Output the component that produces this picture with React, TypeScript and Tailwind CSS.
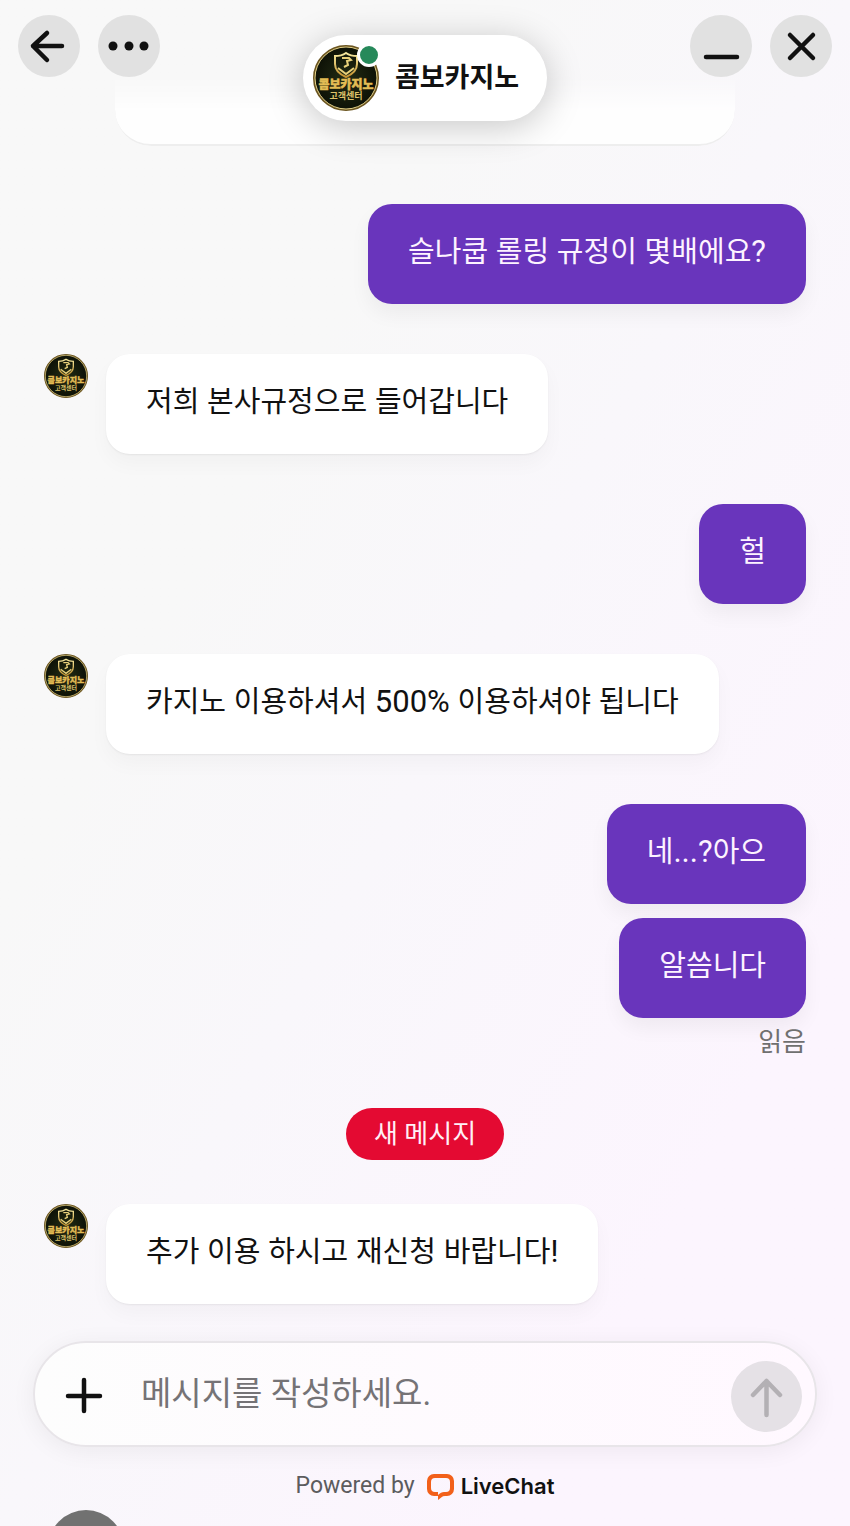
import React, { useId, useState } from 'react';

interface Message {
    id: number;
    from: 'agent' | 'visitor';
    lines: string[];
    read?: boolean;
}

const history: Message[] = [
    { id: 1, from: 'visitor', lines: ['슬나쿱 롤링 규정이 몇배에요?'] },
    { id: 2, from: 'agent', lines: ['저희 본사규정으로 들어갑니다'] },
    { id: 3, from: 'visitor', lines: ['헐'] },
    { id: 4, from: 'agent', lines: ['카지노 이용하셔서 500% 이용하셔야 됩니다'] },
    { id: 5, from: 'visitor', lines: ['네...?아으', '알씀니다'], read: true },
];

const unread: Message[] = [
    { id: 6, from: 'agent', lines: ['추가 이용 하시고 재신청 바랍니다!'] },
];

function Avatar({ className }: { className: string }) {
    const gold = useId();
    const dark = useId();

    return (
        <svg viewBox="0 0 66 66" className={className} aria-hidden="true">
            <defs>
                <linearGradient id={gold} x1="0" y1="0" x2="0" y2="1">
                    <stop offset="0" stopColor="#f6e9a0" />
                    <stop offset="1" stopColor="#c4922f" />
                </linearGradient>
                <radialGradient id={dark}>
                    <stop offset="0" stopColor="#232c14" />
                    <stop offset="1" stopColor="#0d1106" />
                </radialGradient>
            </defs>
            <circle cx="33" cy="33" r="32" fill={`url(#${dark})`} stroke="#6b5520" strokeWidth="2" />
            <circle cx="33" cy="33" r="31" fill="none" stroke="#e5d38a" strokeWidth="1" />
            {/* Shield */}
            <path
                d="M33 8c3 2 7 3 11 3v8c0 6-4 10-11 13-7-3-11-7-11-13v-8c4 0 8-1 11-3Z"
                fill="none"
                stroke={`url(#${gold})`}
                strokeWidth="2"
            />
            <path
                d="M29 13h7l2 2-4 1 1 4-4 2M25 23l8 6 8-6"
                fill="none"
                stroke="#e8d17a"
                strokeWidth="2"
            />
            <text
                x="33"
                y="44"
                textAnchor="middle"
                fill="#e3bd55"
                stroke="#e3bd55"
                strokeWidth="0.5"
                className="font-['Noto_Sans_CJK_KR',sans-serif] text-[12px] font-black"
            >
                콤보카지노
            </text>
            <text
                x="33"
                y="54"
                textAnchor="middle"
                fill="#dfc36b"
                className="font-['Noto_Sans_CJK_KR',sans-serif] text-[9px] font-bold"
            >
                고객센터
            </text>
        </svg>
    );
}

function RoundButton({ label, children }: { label: string; children: React.ReactNode }) {
    return (
        <button
            type="button"
            aria-label={label}
            className="flex size-[62px] items-center justify-center rounded-full bg-[#e1e1e1] text-[#111]"
        >
            <svg
                viewBox="0 0 62 62"
                className="size-full"
                fill="none"
                stroke="currentColor"
                strokeWidth="4.5"
                strokeLinecap="round"
                strokeLinejoin="round"
            >
                {children}
            </svg>
        </button>
    );
}

// Roboto runs small next to Hangul, so digits and punctuation get a larger size
function MixedText({ text }: { text: string }) {
    return (
        <>
            {text.split(/([^가-힣]+)/).map((run, i) =>
                i % 2 ? (
                    <span key={i} className="text-[31px] leading-none">
                        {run}
                    </span>
                ) : (
                    run
                )
            )}
        </>
    );
}

function MessageGroup({ message }: { message: Message }) {
    if (message.from === 'agent') {
        return (
            <div className="flex items-start gap-[18px]">
                <Avatar className="size-11 shrink-0" />
                {message.lines.map((line) => (
                    <p
                        key={line}
                        className="rounded-3xl bg-white px-10 pt-7 pb-8 text-[29px] leading-10 text-[#111] shadow-[0_1px_2px_rgba(0,0,0,0.06),0_10px_20px_rgba(0,0,0,0.03)]"
                    >
                        <MixedText text={line} />
                    </p>
                ))}
            </div>
        );
    }

    return (
        <div className="flex flex-col items-end gap-[14px]">
            {message.lines.map((line) => (
                <p
                    key={line}
                    className="rounded-3xl bg-[#6935bc] px-10 pt-7 pb-8 text-[29px] leading-10 text-[#fdf3ff] shadow-[0_10px_20px_rgba(0,0,0,0.05)]"
                >
                    <MixedText text={line} />
                </p>
            ))}
            {message.read && <span className="-mt-1.5 text-[26px] leading-8 text-[#707070]">읽음</span>}
        </div>
    );
}

export default function App() {
    const [draft, setDraft] = useState('');

    return (
        <div className="relative flex min-h-screen flex-col overflow-hidden bg-linear-to-br from-[#f8f8f8] from-30% via-[#f9f7fb] via-50% to-[#fcf5fe] to-80% font-[Roboto,'Noto_Sans_CJK_KR',sans-serif]">
            {/* Header floats over the scrolled conversation */}
            <header className="absolute inset-x-0 top-0 z-10 flex items-start justify-between px-[18px] pt-[15px]">
                <div className="flex gap-[18px]">
                    <RoundButton label="뒤로">
                        <path d="M44 31H15M29 18 15 31l14 14" />
                    </RoundButton>
                    <RoundButton label="메뉴">
                        <g fill="currentColor" stroke="none">
                            <circle cx="15" cy="31" r="4.5" />
                            <circle cx="31" cy="31" r="4.5" />
                            <circle cx="46" cy="31" r="4.5" />
                        </g>
                    </RoundButton>
                </div>
                <div className="mt-5 flex h-[86px] items-center gap-4 rounded-full bg-white pr-7 pl-[10px] shadow-[0_6px_36px_rgba(0,0,0,0.22)]">
                    <div className="relative">
                        <Avatar className="size-[66px]" />
                        <span className="absolute -top-0.5 -right-0.5 size-6 rounded-full border-3 border-white bg-[#26895a]" />
                    </div>
                    <h1 className="text-[27px] leading-10 font-bold text-[#111]">콤보카지노</h1>
                </div>
                <div className="flex gap-[18px]">
                    <RoundButton label="최소화">
                        <path d="M16 42h31" />
                    </RoundButton>
                    <RoundButton label="닫기">
                        <path d="m20 20 23 23M43 20 20 43" />
                    </RoundButton>
                </div>
            </header>

            <main className="flex flex-1 flex-col pt-[75px]">
                {/* Tail of an earlier card, fading out under the header */}
                <div className="mx-auto h-[71px] w-[73%] rounded-b-[36px] border-b-2 border-[#eeeeee] bg-white/80 [mask-image:linear-gradient(to_bottom,transparent,black_50%)]" />

                <section className="mt-[58px] flex flex-col gap-[50px] px-11" aria-label="대화">
                    {history.map((message) => (
                        <MessageGroup key={message.id} message={message} />
                    ))}
                </section>

                <div className="mx-auto mt-[50px] rounded-full bg-[#e40a32] px-7 pt-1.5 pb-1.5 text-[26px] leading-10 text-[#fff0f6]">
                    새 메시지
                </div>

                <section className="mt-11 px-11" aria-label="새 메시지">
                    {unread.map((message) => (
                        <MessageGroup key={message.id} message={message} />
                    ))}
                </section>
            </main>

            <form
                onSubmit={(e) => e.preventDefault()}
                className="mx-[33px] mt-[37px] flex h-[106px] items-center rounded-full border-2 border-[#e8e5e9] bg-linear-to-r from-[#fdfdfd] to-[#fff8ff] pr-[13px] pl-[30px] shadow-[0_4px_24px_rgba(0,0,0,0.06)]"
            >
                <button type="button" aria-label="파일 첨부" className="mt-0.5 text-[#111]">
                    <svg
                        viewBox="0 0 38 38"
                        className="size-[38px]"
                        fill="none"
                        stroke="currentColor"
                        strokeWidth="4.5"
                        strokeLinecap="round"
                    >
                        <path d="M19 4v31M3 20h32" />
                    </svg>
                </button>
                <input
                    type="text"
                    aria-label="메시지"
                    placeholder="메시지를 작성하세요."
                    value={draft}
                    onChange={(e) => setDraft(e.target.value)}
                    className="ml-[38px] h-12 min-w-0 flex-1 bg-transparent text-[33px] text-[#111] outline-none placeholder:text-[#757376]"
                />
                <button
                    type="submit"
                    aria-label="보내기"
                    className="mt-1 flex size-[71px] items-center justify-center rounded-full bg-[#e5e1e6] text-[#b3b0b4]"
                >
                    <svg
                        viewBox="0 0 71 71"
                        className="size-full"
                        fill="none"
                        stroke="currentColor"
                        strokeWidth="4.5"
                        strokeLinecap="round"
                        strokeLinejoin="round"
                    >
                        <path d="M35.5 54V20M22 34l13.5-14L49 34" />
                    </svg>
                </button>
            </form>

            <footer className="mt-[19px] flex flex-col">
                <div className="flex h-10 items-center justify-center gap-3 text-[23px] leading-8 text-[#5c5c5e]">
                    <span>Powered by</span>
                    <a
                        href="#livechat"
                        className="flex items-center gap-[7px] font-[Inter,sans-serif] text-[22px] font-semibold text-[#111]"
                    >
                        <svg viewBox="0 0 27 27" className="size-[27px]" aria-hidden="true">
                            <path
                                fill="#f2601a"
                                fillRule="evenodd"
                                d="M7 1h13a7 7 0 0 1 7 7v8a7 7 0 0 1-7 7h-2c-3 0-4 2-7 4v-4H7a7 7 0 0 1-7-7V8a7 7 0 0 1 7-7Zm1 4a4 4 0 0 0-4 4v6a4 4 0 0 0 4 4h3v3c2-2 4-3 6-3h2a4 4 0 0 0 4-4V9a4 4 0 0 0-4-4H8Z"
                            />
                        </svg>
                        LiveChat
                    </a>
                </div>
                <div className="mt-1 h-4 overflow-hidden pl-12">
                    <div className="size-[76px] rounded-full bg-[#717171]" />
                </div>
            </footer>
        </div>
    );
}
